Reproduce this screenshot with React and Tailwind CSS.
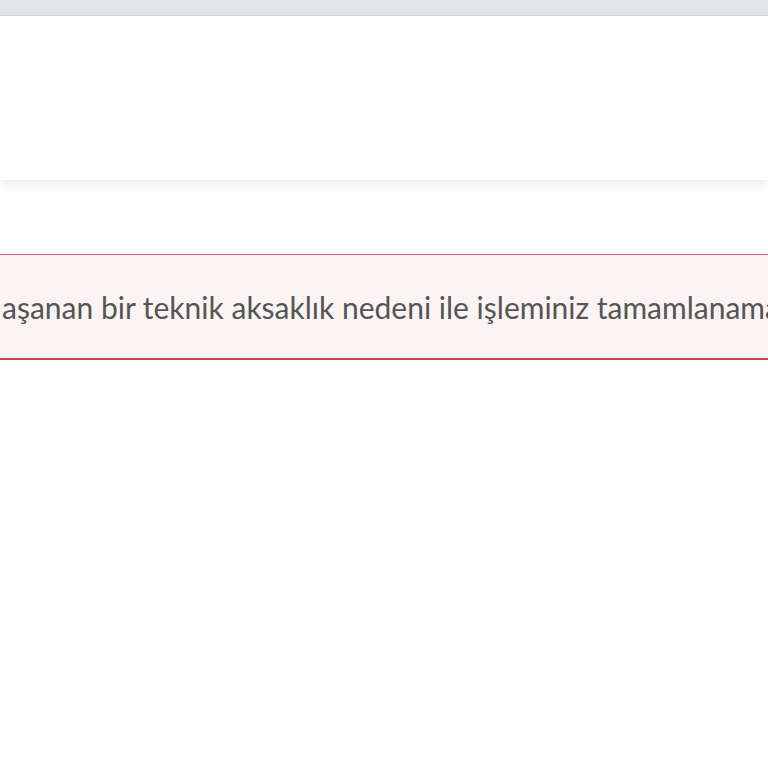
export default function App() {
  return (
    <div className="min-h-screen bg-white" style={{ fontFamily: 'Lato, "Open Sans", sans-serif' }}>
      {/* top strip */}
      <div className="h-4 bg-[#e2e6e9] border-b border-[#d6d9dc]" />

      {/* header */}
      <header className="relative h-[164px] bg-white shadow-[0_4px_12px_rgba(0,0,0,0.09)]" />

      <main className="pt-[74px]">
        <div className="h-[106px] flex items-center overflow-hidden whitespace-nowrap bg-[#fbf4f4] border-t border-t-[#c9626e] border-b-2 border-b-[#c2454c]">
          <p className="pl-[2px] text-[30px] leading-none text-[#555555]">
            aşanan bir teknik aksaklık nedeni ile işleminiz tamamlanamamıştır.
          </p>
        </div>
      </main>
    </div>
  );
}
